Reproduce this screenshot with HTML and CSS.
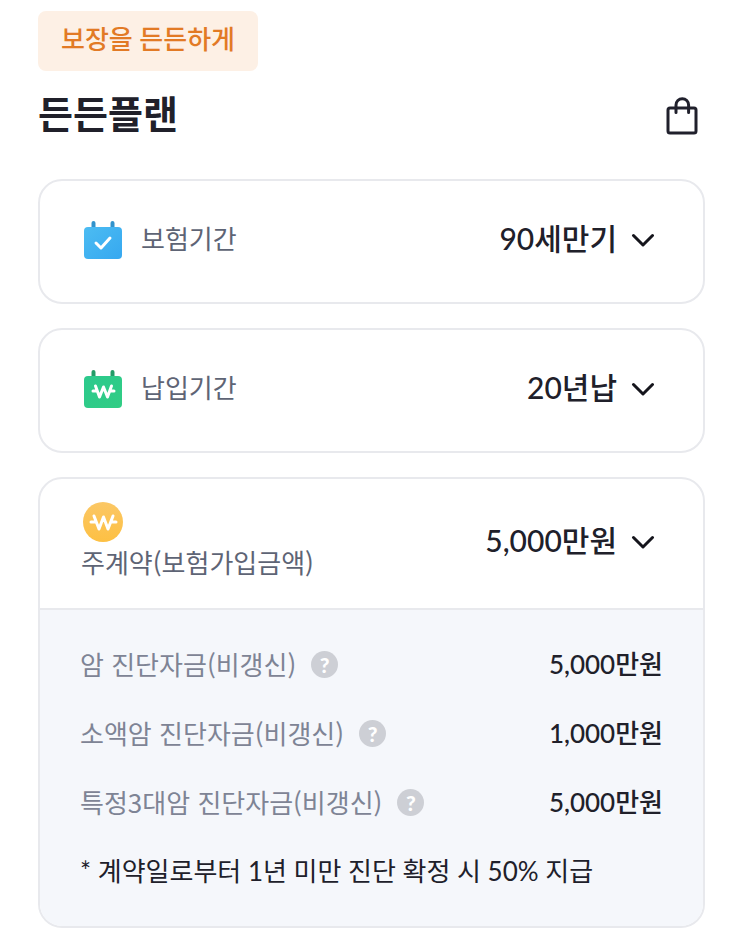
FILE: index.html
```html
<!DOCTYPE html>
<html lang="ko">
<head>
    <meta charset="UTF-8">
    <meta name="viewport" content="width=device-width, initial-scale=1.0">
    <title>든든플랜</title>
    <link rel="stylesheet" href="styles.css">
</head>
<body>
    <main class="plan">
        <span class="badge">보장을 든든하게</span>

        <header class="plan-header">
            <h1>든든플랜</h1>
            <button type="button" class="bag-button" aria-label="장바구니">
                <svg width="34" height="40" viewBox="0 0 34 40" fill="none" stroke="#20202c" stroke-width="3" stroke-linecap="round" stroke-linejoin="round">
                    <rect x="3" y="12" width="28" height="25" rx="2"/>
                    <path d="M11 16.500V9a6.300 6.300 0 0 1 12.600 0v7.500"/>
                </svg>
            </button>
        </header>

        <section class="card">
            <div class="card-row">
                <label class="card-label" for="insurancePeriod">
                    <svg class="icon" width="44" height="44" viewBox="0 0 44 44" fill="none" stroke-linecap="round" stroke-linejoin="round">
                        <defs>
                            <linearGradient id="blue" x1="0" y1="0" x2="1" y2="1">
                                <stop offset="0" stop-color="#4cbcf2"/>
                                <stop offset="1" stop-color="#36a8f0"/>
                            </linearGradient>
                        </defs>
                        <path d="M12.500 5v8M31.500 5v8" stroke="#3293cc" stroke-width="4"/>
                        <rect x="3" y="9" width="38" height="32" rx="4" fill="url(#blue)"/>
                        <path d="M15 25l5 5 9-10" stroke="#fff" stroke-width="3"/>
                    </svg>
                    <span>보험기간</span>
                </label>
                <div class="select-box">
                    <select id="insurancePeriod">
                        <option>90세만기</option>
                        <option>100세만기</option>
                    </select>
                    <svg class="chevron" width="24" height="14" viewBox="0 0 24 14"><path d="M2.500 2.500l9.500 9.500 9.500-9.500"/></svg>
                </div>
            </div>
        </section>

        <section class="card">
            <div class="card-row">
                <label class="card-label" for="paymentPeriod">
                    <svg class="icon" width="44" height="44" viewBox="0 0 44 44" fill="none" stroke-linecap="round" stroke-linejoin="round">
                        <defs>
                            <linearGradient id="green" x1="0" y1="0" x2="1" y2="1">
                                <stop offset="0" stop-color="#2cc98d"/>
                                <stop offset="1" stop-color="#31cd84"/>
                            </linearGradient>
                        </defs>
                        <path d="M12.500 5v8M31.500 5v8" stroke="#239c68" stroke-width="4"/>
                        <rect x="3" y="9" width="38" height="32" rx="4" fill="url(#green)"/>
                        <path d="M14.500 19l4 11 4-10 4 10 4-11M12 24h4M29 24h4" stroke="#fff" stroke-width="3"/>
                    </svg>
                    <span>납입기간</span>
                </label>
                <div class="select-box">
                    <select id="paymentPeriod">
                        <option>20년납</option>
                        <option>30년납</option>
                    </select>
                    <svg class="chevron" width="24" height="14" viewBox="0 0 24 14"><path d="M2.500 2.500l9.500 9.500 9.500-9.500"/></svg>
                </div>
            </div>
        </section>

        <section class="card">
            <div class="card-row main-contract">
                <label class="card-label stacked" for="coverageAmount">
                    <svg class="icon" width="44" height="44" viewBox="0 0 44 44" fill="none" stroke-linecap="round" stroke-linejoin="round">
                        <defs>
                            <linearGradient id="yellow" x1="0" y1="0" x2="0" y2="1">
                                <stop offset="0" stop-color="#fbc765"/>
                                <stop offset="1" stop-color="#fdc043"/>
                            </linearGradient>
                        </defs>
                        <circle cx="22" cy="22" r="20" fill="url(#yellow)"/>
                        <path d="M13 16l5 13 4.500-12 4.500 12 5-13M10 22h5M30 22h5" stroke="#fff" stroke-width="3"/>
                    </svg>
                    <span>주계약(보험가입금액)</span>
                </label>
                <div class="select-box">
                    <select id="coverageAmount">
                        <option>5,000만원</option>
                        <option>3,000만원</option>
                    </select>
                    <svg class="chevron" width="24" height="14" viewBox="0 0 24 14"><path d="M2.500 2.500l9.500 9.500 9.500-9.500"/></svg>
                </div>
            </div>

            <div class="details">
                <dl>
                    <div class="detail-row">
                        <dt>암 진단자금(비갱신) <button type="button" class="help" aria-label="도움말">?</button></dt>
                        <dd>5,000만원</dd>
                    </div>
                    <div class="detail-row">
                        <dt>소액암 진단자금(비갱신) <button type="button" class="help" aria-label="도움말">?</button></dt>
                        <dd>1,000만원</dd>
                    </div>
                    <div class="detail-row">
                        <dt>특정3대암 진단자금(비갱신) <button type="button" class="help" aria-label="도움말">?</button></dt>
                        <dd>5,000만원</dd>
                    </div>
                </dl>
                <p class="notice">* 계약일로부터 1년 미만 진단 확정 시 50% 지급</p>
            </div>
        </section>
    </main>
</body>
</html>
```
FILE: styles.css
```css
* {
    box-sizing: border-box;
}

body {
    margin: 0;
    font-family: Lato, 'Noto Sans CJK KR', sans-serif;
    font-size: 26px;
    line-height: 36px;
    color: #20202a;
    background: #ffffff;
}

button, select {
    margin: 0;
    padding: 0;
    border: none;
    background: none;
    font-family: inherit;
    color: inherit;
    cursor: pointer;
}

.plan {
    padding: 11px 38px 20px;
}

.badge {
    display: inline-block;
    padding: 10px 23px 14px;
    border-radius: 8px;
    background: #fdf0e5;
    color: #e27a25;
    font-weight: 500;
}

.plan-header {
    display: flex;
    justify-content: space-between;
    align-items: center;
    margin: 16px 0 40px;
    padding-right: 6px;
}

h1 {
    margin: 0;
    font-size: 38px;
    line-height: 52px;
    font-weight: 700;
}

.bag-button {
    padding-top: 6px;
}

.bag-button svg, .icon, .chevron {
    display: block;
}

.card {
    margin-bottom: 24px;
    border: 2px solid #e8e9ed;
    border-radius: 24px;
    overflow: hidden;
}

.card-row {
    display: flex;
    justify-content: space-between;
    align-items: center;
    min-height: 121px;
    padding: 0 48px 4px 41px;
}

.card-label {
    display: flex;
    align-items: center;
    gap: 16px;
    color: #5e6475;
}

.card-label span {
    padding-bottom: 4px;
    font-family: 'Noto Sans CJK KR', sans-serif;
}

.card-label.stacked {
    flex-direction: column;
    align-items: flex-start;
    gap: 0;
}

.main-contract {
    min-height: 129px;
}

.select-box {
    display: grid;
    align-items: center;
}

.select-box select, .chevron {
    grid-area: 1 / 1;
}

.select-box select {
    appearance: none;
    padding: 0 38px 4px 0;
    font-size: 30px;
    line-height: 44px;
    font-weight: 500;
    text-align-last: right;
}

.chevron {
    justify-self: end;
    fill: none;
    stroke: #15151c;
    stroke-width: 3;
    stroke-linecap: round;
    stroke-linejoin: round;
    pointer-events: none;
}

.details {
    padding: 36px 40px 37px;
    border-top: 2px solid #e8e9ed;
    background: #f5f7fb;
}

dl {
    margin: 0;
}

.detail-row {
    display: flex;
    justify-content: space-between;
    margin-bottom: 33px;
}

dt {
    display: flex;
    align-items: center;
    gap: 15px;
    color: #7e8495;
    font-family: 'Noto Sans CJK KR', sans-serif;
}

dd {
    margin: 0;
    font-weight: 500;
}

.help {
    width: 27px;
    height: 27px;
    border-radius: 50%;
    background: #cdcfd5;
    color: #ffffff;
    font-family: Lato, sans-serif;
    font-size: 21px;
    line-height: 27px;
    font-weight: 900;
}

.notice {
    margin: 0;
}
```
